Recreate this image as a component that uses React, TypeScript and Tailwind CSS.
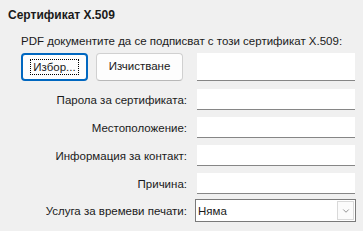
import React from "react";
import { ChevronDown } from "lucide-react";

const font = { fontFamily: "'Liberation Sans', Arial, sans-serif" };

function Field() {
  return <div className="h-[21px] w-[158px] bg-white border-b border-[#868686]" />;
}

function Row({ label, children }: { label: string; children: React.ReactNode }) {
  return (
    <div className="flex items-center">
      <div className="w-[187px] text-right text-[11.5px] leading-[16px] whitespace-nowrap text-[#1a1a1a]">{label}</div>
      <div className="ml-[10px]">{children}</div>
    </div>
  );
}

export default function App() {
  return (
    <div className="w-[363px] h-[231px] bg-[#f0f0f0] text-[#1a1a1a] overflow-hidden" style={font}>
      <div className="pl-2 pt-[7px] text-[12px] leading-[16px] font-bold">Сертификат X.509</div>
      <div className="pl-[21px] mt-[10px] text-[11.5px] leading-[16px] whitespace-nowrap">
        PDF документите да се подписват с този сертификат X.509:
      </div>
      <div className="flex items-start mt-[4px] pl-[21px]">
        <button className="h-[28px] w-[67px] rounded-[4px] border-2 border-[#0067c0] bg-[#fdfdfd] flex items-center justify-center text-[11.5px]">
          <span className="border border-dotted border-black px-[2px] leading-[14px]">Избор...</span>
        </button>
        <button className="ml-[8px] h-[28px] w-[87px] rounded-[4px] border border-[#d0d0d0] border-b-[#b8b8b8] bg-[#fdfdfd] text-[11.5px]">
          Изчистване
        </button>
        <div className="ml-[14px] h-[28px] w-[158px] bg-white border-b border-[#868686]" />
      </div>
      <div className="mt-[8px] flex flex-col gap-[7px]">
        <Row label="Парола за сертификата:"><Field /></Row>
        <Row label="Местоположение:"><Field /></Row>
        <Row label="Информация за контакт:"><Field /></Row>
        <Row label="Причина:"><Field /></Row>
      </div>
      <div className="mt-[5px]">
        <Row label="Услуга за времеви печати:">
          <div className="-ml-[2px] h-[23px] w-[161px] bg-white border border-[#7a7a7a] flex items-center justify-between">
            <span className="pl-[2px] text-[11.5px] leading-[16px]">Няма</span>
            <div className="mr-[1px] h-[19px] w-[17px] border border-[#d9d9d9] bg-[#fbfbfb] flex items-center justify-center">
              <ChevronDown size={10} strokeWidth={1.5} className="text-[#555]" />
            </div>
          </div>
        </Row>
      </div>
    </div>
  );
}
